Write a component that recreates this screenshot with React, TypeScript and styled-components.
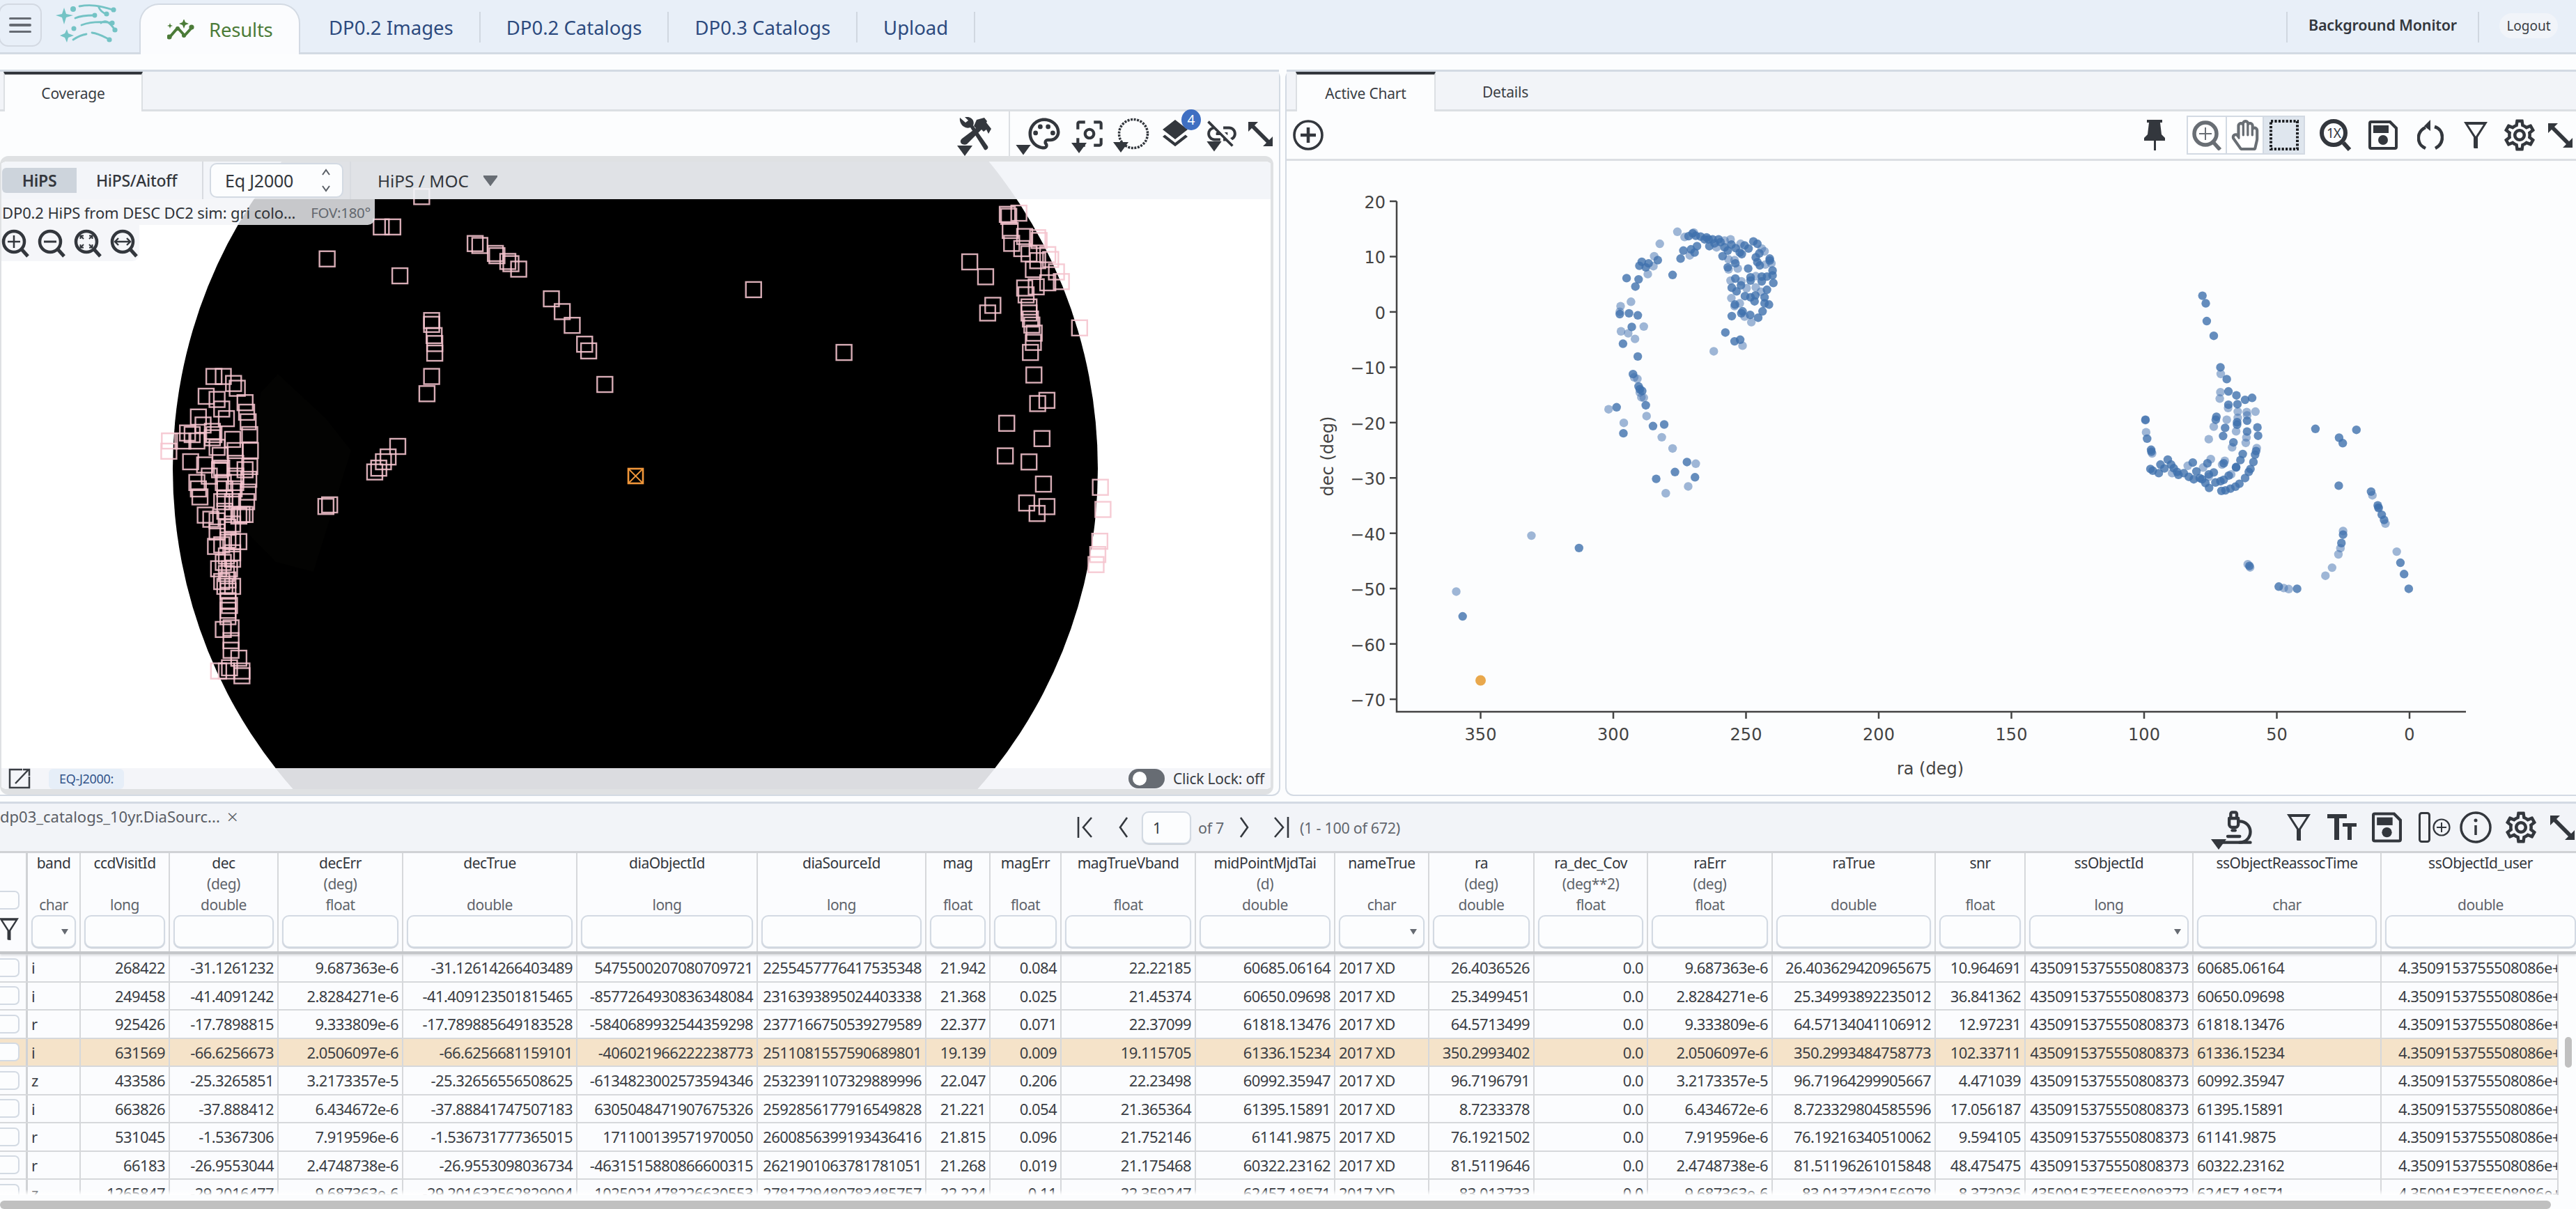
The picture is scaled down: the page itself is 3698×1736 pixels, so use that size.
import React from 'react';
import styled, { createGlobalStyle } from 'styled-components';
import { MdOutlinePalette, MdCenterFocusWeak, MdLayers, MdLinkOff, MdOutlineSettings } from 'react-icons/md';
import { FaRegHandPaper } from 'react-icons/fa';
import { Microscope } from 'lucide-react';

const Global = createGlobalStyle`
  html, body { margin: 0; padding: 0; background: #fcfdfe; }
  body { font-family: "Noto Sans", "Open Sans", sans-serif; color: #33373d; }
  * { box-sizing: border-box; }
`;

const Page = styled.div`
  width: 3698px; height: 1736px; overflow: hidden; display: flex; flex-direction: column; background: #fcfdfe;
`;

/* ---------- top bar ---------- */
const TopBar = styled.header`
  height: 78px; flex: none; display: flex; align-items: flex-end; background: #e8eff8;
  border-bottom: 3px solid #d3dae3; position: relative;
`;
const MenuButton = styled.button`
  width: 62px; height: 62px; margin: 0 20px 8px -2px; flex: none; background: #e8eff8; padding: 0;
  border: 2px solid #d3d9e2; border-radius: 14px; display: flex; flex-direction: column; gap: 6px;
  align-items: center; justify-content: center;
  & > i { display: block; width: 32px; height: 3.5px; border-radius: 2px; background: #666b73; }
`;
const LogoBox = styled.div` width: 90px; height: 62px; margin-bottom: 9px; flex: none; margin-right: 30px; `;
const ResultsTab = styled.div`
  width: 231px; height: 73px; flex: none; margin-bottom: -3px; display: flex; align-items: center; gap: 20px;
  padding: 0 0 0 38px; background: #fbfcfe; border: 2px solid #d3dae3; border-bottom: 0;
  border-radius: 28px 28px 0 0; color: #4b7b38; font-size: 27.5px; letter-spacing: -0.2px;
`;
const NavTabs = styled.nav`
  display: flex; align-items: center; gap: 37px; height: 44px; margin: 0 0 14px 41px; color: #2c4a7e; font-size: 27.5px;
  white-space: nowrap;
`;
const TabSep = styled.span` width: 2px; height: 44px; background: #d0d7e0; flex: none; `;
const TopRight = styled.div`
  margin-left: auto; display: flex; align-items: center; height: 44px; margin-bottom: 14px; font-size: 21px; white-space: nowrap;
`;
const Monitor = styled.span` font-weight: 600; margin: -8px 30px 0; font-size: 21.5px; letter-spacing: -0.2px; `;
const Logout = styled.span`
  width: 84px; height: 36px; margin: -4px 26px 0 29px; border-radius: 18px; background: #f1f4f9; display: flex;
  align-items: center; justify-content: center; font-size: 19px; color: #3a3e44;
`;
const Strip = styled.div` height: 22px; flex: none; `;

/* ---------- panels ---------- */
const Upper = styled.section` height: 1051px; flex: none; display: flex; gap: 7px; padding-bottom: 8px; `;
const LeftPanel = styled.div`
  width: 1838px; flex: none; display: flex; flex-direction: column; border-right: 2px solid #d3dae3;
  border-bottom: 2px solid #d3dae3; border-radius: 0 12px 12px 0;
`;
const RightPanel = styled.div`
  flex: 1; min-width: 0; display: flex; flex-direction: column; border-left: 2px solid #d3dae3;
  border-bottom: 2px solid #d3dae3; border-radius: 12px 0 0 12px;
`;
const TabBar = styled.div`
  height: 60px; flex: none; display: flex; background: #f2f4f8; border-top: 3px solid #d3dae3;
  border-bottom: 3px solid #dcdfe3; padding-left: ${p => p.$pad}px; font-size: 21px;
`;
const PanelTab = styled.div`
  width: ${p => p.$w}px; height: 57px; flex: none; display: flex; align-items: center; justify-content: center;
  color: #3a3e44; letter-spacing: -0.2px;
  ${p => p.$active && `background:#fcfdfe; border-top:4px solid #33373d; border-left:2px solid #dcdfe3; border-right:2px solid #dcdfe3;`}
`;
const Toolbar = styled.div`
  height: ${p => p.$h}px; flex: none; display: flex; align-items: center; padding-right: ${p => p.$pr}px;
  justify-content: ${p => p.$end ? 'flex-end' : 'flex-start'};
  color: #33373d; border-bottom: ${p => p.$line ? '3px solid #dcdfe3' : '0'};
`;
const IconBtn = styled.span`
  width: ${p => p.$w}px; height: ${p => p.$h || p.$w}px; margin-left: ${p => p.$ml || 0}px; margin-top: ${p => p.$mt || 0}px; flex: none; position: relative;
  display: flex; align-items: center; justify-content: center; color: ${p => p.$c || 'inherit'};
  & > svg { display: block; flex: none; }
`;
const Caret = styled.i`
  position: absolute; left: ${p => p.$l ?? -2}px; bottom: ${p => p.$b ?? -4}px; width: 22px; height: 15px; background: #33373d;
  clip-path: polygon(0 0, 100% 0, 50% 100%);
`;
const Badge = styled.b`
  position: absolute; left: 31px; top: -14px; width: 28px; height: 30px; border-radius: 50%; background: #3f6fc2; color: #fff;
  font-weight: 400; font-size: 19px; display: flex; align-items: center; justify-content: center;
`;
const ToolSep = styled.span` width: 2px; height: 64px; background: #dcdfe3; margin-left: ${p => p.$ml}px; flex: none; `;
const ModeGroup = styled.div`
  display: flex; margin-left: ${p => p.$ml}px; height: 56px; border: 2px solid #d3dae3; flex: none; background: #fff;
`;
const ModeBtn = styled.span`
  width: ${p => p.$w}px; display: flex; align-items: center; justify-content: center; color: #696e74;
  border-left: ${p => p.$first ? 0 : '2px solid #d3dae3'}; background: ${p => p.$on ? '#dfe6ee' : 'transparent'};
`;

/* ---------- image viewer ---------- */
const Viewer = styled.div`
  height: 917px; flex: none; margin-right: 8px; position: relative; overflow: hidden; background: #fff;
  border: solid #dfe1e3; border-width: 8px 4px 8px 2px; border-radius: 12px;
`;
const Sky = styled.svg` position: absolute; left: 0; top: 0; display: block; `;
const ViewerTop = styled.div`
  position: absolute; left: 0; right: 0; top: 0; height: 54px; background: rgba(242, 244, 248, .925);
  display: flex; align-items: center; font-size: 23px; color: #33373d;
`;
const ModeSwitch = styled.span`
  height: 36px; display: flex; align-items: center; justify-content: center; width: ${p => p.$w}px; flex: none;
  border-radius: ${p => p.$on ? '6px 0 0 6px' : '0'}; background: ${p => p.$on ? '#cdd4dc' : 'transparent'};
  font-weight: ${p => p.$on ? 600 : 500}; margin-left: ${p => p.$ml || 0}px; letter-spacing: -0.3px;
`;
const VSep = styled.span` width: 2px; height: 54px; background: #d8dbe0; flex: none; margin-left: ${p => p.$ml}px; `;
const CoordSelect = styled.span`
  width: 192px; height: 50px; margin-left: 9px; flex: none; background: #fcfdfe; border: 2px solid #d3dae3; border-radius: 10px;
  display: flex; align-items: center; justify-content: space-between; padding: 0 16px 0 20px; font-size: 25px; letter-spacing: -0.2px;
`;
const HipsMenu = styled.span` margin-left: 38px; display: flex; align-items: center; gap: 21px; font-size: 24.4px; white-space: nowrap; `;
const InfoBar = styled.div`
  position: absolute; left: 0; top: 54px; width: 536px; height: 37px; background: rgba(243, 244, 248, .82);
  border-radius: 0 0 10px 0; display: flex; align-items: center; justify-content: space-between; padding: 0 6px 0 1px;
  font-size: 22px; letter-spacing: -0.12px; white-space: nowrap; color: #2f3338;
`;
const Fov = styled.span` color: #62676e; font-size: 20.5px; letter-spacing: -0.3px; `;
const ZoomTools = styled.div`
  position: absolute; left: -2px; top: 91px; width: 200px; height: 52px; background: rgba(245, 246, 249, .96);
  border-radius: 0 0 10px 0; display: flex; align-items: center; gap: 11px; color: #33373d; padding-left: 2px;
`;
const ViewerBottom = styled.div`
  position: absolute; left: 0; right: 0; bottom: 0; height: 30px; background: rgba(243, 244, 248, .9);
  display: flex; align-items: center; padding: 0 9px 0 10px; color: #3a3e44;
`;
const CoordChip = styled.span`
  margin-left: 26px; width: 108px; height: 29px; border-radius: 6px; background: #e6eef8; color: #33548a; font-size: 18px;
  display: flex; align-items: center; justify-content: center; letter-spacing: -0.3px;
`;
const LockSwitch = styled.span`
  margin-left: auto; width: 52px; height: 28px; background: #676c73; border-radius: 15px; display: flex; align-items: center;
  padding-left: 6px; & > i { width: 20px; height: 20px; border-radius: 50%; background: #fff; }
`;
const LockLabel = styled.span` margin-left: 12px; font-size: 21px; letter-spacing: -0.2px; `;

/* ---------- chart ---------- */
const ChartArea = styled.div` flex: 1; min-height: 0; `;
const ChartSvg = styled.svg` display: block; font-family: "DejaVu Sans", Verdana, sans-serif; `;

/* ---------- table ---------- */
const TablePanel = styled.section` height: 585px; flex: none; display: flex; flex-direction: column; position: relative; `;
const TableTools = styled.div`
  height: 74px; flex: none; background: #f2f4f8; border-top: 3px solid #d3dae3; border-bottom: 3px solid #d0d2d5; display: flex;
`;
const TableLabel = styled.div`
  width: 1546px; flex: none; padding-top: 2px; font-size: 22px; color: #5a5e65; white-space: nowrap;
  display: flex; gap: 10px; align-items: flex-start; & > span { line-height: 32px; }
`;
const CloseMark = styled.span` font-size: 28px; line-height: 30px; font-weight: 300; `;
const Pager = styled.div` display: flex; align-items: center; color: #33373d; font-size: 21.5px; height: 68px; letter-spacing: -0.3px; `;
const PageInput = styled.span`
  width: 71px; height: 47px; margin: 0 10px 0 18px; background: #fcfdfe; border: 2px solid #d3dae3; border-radius: 10px;
  display: flex; align-items: center; padding-left: 14px; box-shadow: 0 1px 1px #c7ccd3;
`;
const PageMuted = styled.span` color: #62676e; margin-left: ${p => p.$ml || 0}px; `;
const TableIcons = styled.div` margin-left: auto; display: flex; align-items: center; height: 68px; color: #33373d; `;

const COLS = [
  { n: 'band', t: 'char', w: 76, left: true, drop: true },
  { n: 'ccdVisitId', t: 'long', w: 128 },
  { n: 'dec', u: '(deg)', t: 'double', w: 156 },
  { n: 'decErr', u: '(deg)', t: 'float', w: 179 },
  { n: 'decTrue', t: 'double', w: 250 },
  { n: 'diaObjectId', t: 'long', w: 259 },
  { n: 'diaSourceId', t: 'long', w: 242 },
  { n: 'mag', t: 'float', w: 92 },
  { n: 'magErr', t: 'float', w: 102 },
  { n: 'magTrueVband', t: 'float', w: 193 },
  { n: 'midPointMjdTai', u: '(d)', t: 'double', w: 200 },
  { n: 'nameTrue', t: 'char', w: 135, left: true, drop: true },
  { n: 'ra', u: '(deg)', t: 'double', w: 151 },
  { n: 'ra_dec_Cov', u: '(deg**2)', t: 'float', w: 163 },
  { n: 'raErr', u: '(deg)', t: 'float', w: 179 },
  { n: 'raTrue', t: 'double', w: 234 },
  { n: 'snr', t: 'float', w: 129 },
  { n: 'ssObjectId', t: 'long', w: 241, drop: true },
  { n: 'ssObjectReassocTime', t: 'char', w: 270, left: true },
  { n: 'ssObjectId_user', t: 'double', w: 284, clip: true },
];
const GRID = `40px ${COLS.map(c => c.w + 'px').join(' ')}`;

const ID = '4350915375550808373';
const U = '4.3509153755508086e+';
const N = '2017 XD';
const ROWS: string[][] = [
  ['i','268422','-31.1261232','9.687363e-6','-31.12614266403489','5475500207080709721','2255457776417535348','21.942','0.084','22.22185','60685.06164',N,'26.4036526','0.0','9.687363e-6','26.403629420965675','10.964691',ID,'60685.06164',U],
  ['i','249458','-41.4091242','2.8284271e-6','-41.409123501815465','-8577264930836348084','2316393895024403338','21.368','0.025','21.45374','60650.09698',N,'25.3499451','0.0','2.8284271e-6','25.34993892235012','36.841362',ID,'60650.09698',U],
  ['r','925426','-17.7898815','9.333809e-6','-17.789885649183528','-5840689932544359298','2377166750539279589','22.377','0.071','22.37099','61818.13476',N,'64.5713499','0.0','9.333809e-6','64.57134041106912','12.97231',ID,'61818.13476',U],
  ['i','631569','-66.6256673','2.0506097e-6','-66.6256681159101','-406021966222238773','2511081557590689801','19.139','0.009','19.115705','61336.15234',N,'350.2993402','0.0','2.0506097e-6','350.2993484758773','102.33711',ID,'61336.15234',U],
  ['z','433586','-25.3265851','3.2173357e-5','-25.32656556508625','-6134823002573594346','2532391107329889996','22.047','0.206','22.23498','60992.35947',N,'96.7196791','0.0','3.2173357e-5','96.71964299905667','4.471039',ID,'60992.35947',U],
  ['i','663826','-37.888412','6.434672e-6','-37.88841747507183','6305048471907675326','2592856177916549828','21.221','0.054','21.365364','61395.15891',N,'8.7233378','0.0','6.434672e-6','8.723329804585596','17.056187',ID,'61395.15891',U],
  ['r','531045','-1.5367306','7.919596e-6','-1.536731777365015','171100139571970050','2600856399193436416','21.815','0.096','21.752146','61141.9875',N,'76.1921502','0.0','7.919596e-6','76.19216340510062','9.594105',ID,'61141.9875',U],
  ['r','66183','-26.9553044','2.4748738e-6','-26.9553098036734','-4631515880866600315','2621901063781781051','21.268','0.019','21.175468','60322.23162',N,'81.5119646','0.0','2.4748738e-6','81.51196261015848','48.475475',ID,'60322.23162',U],
  ['z','1265847','-29.2016477','9.687363e-6','-29.201632562829094','1025021478226630553','2781729480783485757','22.224','0.11','22.359247','62457.18571',N,'83.013733','0.0','9.687363e-6','83.0137430156978','8.373036',ID,'62457.18571',U],
];

const HeadRow = styled.div`
  height: 145px; flex: none; display: grid; grid-template-columns: ${GRID}; background: #fbfcfe; overflow: hidden;
  border-bottom: 4px solid #c4c6c9; box-shadow: 0 2px 3px #d8dade; position: relative; z-index: 1;
`;
const HeadCell = styled.div`
  display: flex; flex-direction: column; align-items: center; border-right: ${p => p.$last ? 0 : '2px solid #d6d8db'}; min-width: 0;
`;
const HeadSel = styled.div`
  border-right: 3px solid #d0d2d5; display: flex; flex-direction: column; align-items: flex-start; padding-top: 54px; color: #33373d;
`;
const HeadBox = styled.i`
  display: block; width: 28px; height: 27px; border: 2px solid #d3dae3; border-left: 0; border-radius: 0 7px 7px 0; background: #fcfdfe;
`;
const ColName = styled.span` height: 29px; line-height: 29px; font-size: 21px; letter-spacing: -0.5px; white-space: nowrap; color: #33373d; `;
const ColSub = styled.span` height: 30px; line-height: 30px; font-size: 21px; letter-spacing: -0.5px; white-space: nowrap; color: #5f646b; `;
const FilterBox = styled.span`
  position: relative; width: calc(100% - 10px); height: 47px; margin-top: 0; flex: none; background: #fcfdfe; border: 2px solid #d3dae3;
  border-radius: 10px; box-shadow: 0 1px 1px #c7ccd3;
  ${p => p.$drop && `&::after{content:'';position:absolute;right:9px;top:18px;border:5.5px solid transparent;border-top:8px solid #666b72;border-bottom:0;}`}
`;
const TableBody = styled.div`
  height: 346px; flex: none; width: 3673px; overflow: hidden; position: relative; border-right: 2px solid #d6d8db;
  &::after { content: ''; position: absolute; left: 0; right: 0; bottom: 0; height: 8px; background: linear-gradient(rgba(255,255,255,0), #fff); }
`;
const DataRow = styled.div`
  height: 40.5px; display: grid; grid-template-columns: ${GRID}; background: ${p => p.$hi ? '#f5e3c9' : '#fbfcfe'};
  border-bottom: 2.5px solid #d6d8db; font-size: 22px; letter-spacing: -0.6px; color: #3a3e44;
`;
const SelCell = styled.div`
  border-right: 3px solid #d0d2d5; display: flex; align-items: center;
  & > i { display: block; width: 28px; height: 27px; border: 2px solid #d3dae3; border-left: 0; border-radius: 0 7px 7px 0; background: #fcfdfe; }
`;
const DataCell = styled.div`
  line-height: 38px; white-space: nowrap; overflow: hidden; border-right: 2px solid ${p => p.$last ? 'transparent' : '#d6d8db'};
  text-align: ${p => p.$left || p.$clip ? 'left' : 'right'}; padding: 0 ${p => p.$clip ? 0 : 5}px 0 ${p => p.$clip ? 24 : 5}px;
`;
const ScrollTrack = styled.div` height: 20px; flex: none; display: flex; align-items: flex-end; `;
const ScrollThumb = styled.i` width: 3662px; height: 12px; border-radius: 6px; background: #c0c0c0; `;
const VScroll = styled.i`
  position: absolute; left: 3682px; top: 338px; width: 10px; height: 44px; border-radius: 5px; background: #c0c0c0; z-index: 2;
`;

/* ---------- icons ---------- */
const Tools = () => (
  <svg width="48" height="48" viewBox="0 0 48 48" fill="currentColor">
    <path d="M3 1l8 7 4-3-5-5c5-1 10 1 12 5 1 3 1 5 0 7l21 30c1 2 0 4-2 5s-3 0-4-2L18 15c-3 1-6 1-9-1C5 12 2 6 3 1z" />
    <path d="M27 4l11-3 4 5-1 2 7 9-4 7-3-6-4 3-3-3-21 21c-2 1-6 1-8-1-2-3-1-5 1-7L26 16l-3-3z" />
  </svg>
);
const Expand = ({ s = 36 }: { s?: number }) => (
  <svg width={s} height={s} viewBox="0 0 36 36" fill="currentColor">
    <path d="M1 1h14L10 6l21 21 5-5v14H22l5-5L6 10l-5 5z" />
  </svg>
);
const Lasso = () => (
  <svg width="46" height="46" viewBox="0 0 46 46" fill="none" stroke="currentColor">
    <circle cx="23" cy="23" r="20.5" strokeWidth="3.5" strokeDasharray="3 1.6" />
  </svg>
);
const Glass = ({ kind }: { kind: string }) => (
  <svg width="41" height="41" viewBox="0 0 41 41" fill="none" stroke="currentColor">
    <circle cx="18" cy="18" r="15" strokeWidth="4.5" />
    <path d="M29 29l9 10" strokeWidth="5" />
    {kind === 'in' && <path d="M18 9v18M9 18h18" strokeWidth="2.5" />}
    {kind === 'out' && <path d="M9 18h18" strokeWidth="3" />}
    {kind === 'fit' && <path d="M10 10l4 4M26 10l-4 4M10 26l4-4M26 26l-4-4M9.5 14V9.5H14M26.500 14V9.500H22M9.500 22v4.500H14M26.500 22v4.500H22" strokeWidth="2" />}
    {kind === 'width' && <path d="M8 18h20M12 13l-5 5 5 5M24 13l5 5-5 5" strokeWidth="2.4" />}
  </svg>
);
const External = () => (
  <svg width="32" height="30" viewBox="0 0 32 30" fill="none" stroke="currentColor" strokeWidth="2.5">
    <path d="M20 2H2v26h28V12M10 22L29 2M21 2h9v9" />
  </svg>
);
const Floppy = ({ w = 42, h = 42 }: { w?: number; h?: number }) => (
  <svg width={w} height={h} viewBox="0 0 42 42">
    <path fill="currentColor" fillRule="evenodd" d="M4 0h28l10 10v28a4 4 0 0 1-4 4H4a4 4 0 0 1-4-4V4a4 4 0 0 1 4-4zM4 4v34h34V12l-8-8z" />
    <rect x="7" y="7" width="22" height="11" fill="currentColor" />
    <circle cx="21" cy="28" r="7" fill="currentColor" />
  </svg>
);
const Reset = () => (
  <svg width="38" height="44" viewBox="0 0 38 44" fill="none" stroke="currentColor" strokeWidth="4.5">
    <path d="M12 11C3 15 0 24 3 32c1 4 5 7 9 9M26 41c6-3 10-9 10-16 0-7-4-13-11-15" />
    <path d="M19 0l-9 9 9 7z" fill="currentColor" stroke="none" />
  </svg>
);
const Funnel = ({ w = 34, h = 38 }: { w?: number; h?: number }) => (
  <svg width={w} height={h} viewBox="0 0 34 38" fill="currentColor">
    <path fillRule="evenodd" d="M0 0h34L20 22v15a1 1 0 0 1-2 1h-2a2 2 0 0 1-2-1V22zM6 4l11 17L28 4z" />
  </svg>
);
const Pin = () => (
  <svg width="30" height="44" viewBox="0 0 30 44" fill="currentColor">
    <path d="M4 0h22v4h-3l2 17 5 5v4H17v14h-3V30H0v-4l5-5 2-17H4z" />
  </svg>
);
const OneX = () => (
  <svg width="47" height="46" viewBox="0 0 47 46" fill="none" stroke="currentColor">
    <circle cx="20" cy="20" r="17" strokeWidth="6" />
    <path d="M34 34l9 10" strokeWidth="6" />
    <text x="20" y="27" textAnchor="middle" fontFamily="Noto Sans" fontSize="19" fill="currentColor" stroke="none" letterSpacing="-1">1X</text>
  </svg>
);
const Marquee = () => (
  <svg width="42" height="44" viewBox="0 0 42 44" fill="none" stroke="#1b1d20" strokeWidth="4">
    <rect x="2" y="2" width="38" height="40" strokeDasharray="3.2 2.2" />
  </svg>
);
const ZoomGray = () => (
  <svg width="42" height="44" viewBox="0 0 42 44" fill="none" stroke="currentColor">
    <circle cx="19" cy="20" r="16" strokeWidth="5.5" />
    <path d="M31 33l9 10" strokeWidth="5.5" />
    <path d="M19 11v18M10 20h18" strokeWidth="2" />
  </svg>
);
const TextSize = () => (
  <svg width="42" height="38" viewBox="0 0 42 38" fill="currentColor">
    <path d="M0 0h28v6H17v31h-7V6H0zM22 13h20v5h-7v19h-6V18h-7z" />
  </svg>
);
const AddColumn = () => (
  <svg width="46" height="44" viewBox="0 0 46 44" fill="none" stroke="currentColor">
    <rect x="1.5" y="1.5" width="14" height="41" rx="3" strokeWidth="3" />
    <circle cx="33" cy="22" r="11.5" strokeWidth="2.2" />
    <path d="M33 15v14M26 22h14" strokeWidth="2" />
  </svg>
);
const InfoIcon = () => (
  <svg width="46" height="46" viewBox="0 0 46 46" fill="none" stroke="currentColor">
    <circle cx="23" cy="23" r="21" strokeWidth="3.5" />
    <path d="M23 20v14" strokeWidth="3.5" />
    <circle cx="23" cy="13" r="2.5" fill="currentColor" stroke="none" />
  </svg>
);
const PlusCircle = () => (
  <svg width="48" height="48" viewBox="0 0 48 48" fill="none" stroke="#33373d">
    <circle cx="24" cy="24" r="20" strokeWidth="3.6" />
    <path d="M24 13v22M13 24h22" strokeWidth="4.5" />
  </svg>
);
const PagerArrow = ({ dir, bar }: { dir: 'l' | 'r'; bar?: boolean }) => (
  <svg width={bar ? 24 : 16} height="34" viewBox={bar ? '0 0 24 34' : '0 0 16 34'} fill="none" stroke="#33373d" strokeWidth="2.6">
    {dir === 'l' && !bar && <path d="M13 3L3 17l10 14" />}
    {dir === 'r' && !bar && <path d="M3 3l10 14L3 31" />}
    {dir === 'l' && bar && <path d="M2 2v30M21 3L9 17l12 14" />}
    {dir === 'r' && bar && <path d="M22 2v30M3 3l12 14L3 31" />}
  </svg>
);
const Stepper = () => (
  <svg width="14" height="36" viewBox="0 0 14 36" fill="none" stroke="#5a5f66" strokeWidth="2">
    <path d="M2 10l5-7 5 7M2 26l5 7 5-7" />
  </svg>
);
const Logo = () => (
  <svg width="90" height="62" viewBox="80 4 90 62" fill="none" stroke="#74c3c5" strokeWidth="2.8" strokeLinecap="round">
    <path fill="#74c3c5" stroke="none" d="M92 11l3 9 10 2-10 3-3 10-3-10-9-3 9-2zM96 42l2 6 8 3-8 3-2 7-3-7-7-3 7-3z" />
    <g fill="#74c3c5" stroke="none">
      <circle cx="105" cy="13" r="4" /><circle cx="106" cy="41" r="3.5" /><circle cx="163" cy="14" r="3.6" />
      <circle cx="153" cy="20" r="3.6" /><circle cx="136" cy="22" r="3.4" /><circle cx="161" cy="33" r="3.6" />
      <circle cx="165" cy="43" r="3.6" /><circle cx="157" cy="57" r="3.6" />
    </g>
    <path d="M114 9c16-3 28-1 48 5M141 9c3 7 7 10 12 11M108 26c9-4 18-4 27-4M117 36c14-5 30-5 44-3M145 33c6-5 12-2 20 10M105 57c6-4 12-7 19-8M132 47c9 1 16 5 24 9" />
  </svg>
);
const ResultsIcon = () => (
  <svg width="40" height="30" viewBox="240 26 40 30" fill="none" stroke="#4b7b38" strokeWidth="4">
    <path d="M243 52l12-14 10 11 11-12" strokeLinejoin="round" />
    <g fill="#4b7b38" stroke="none">
      <circle cx="243" cy="51" r="3.6" /><circle cx="255" cy="39" r="3" /><circle cx="264" cy="49" r="3" /><circle cx="275" cy="37" r="3.6" />
      <path d="M264 25l2 5 5 2-5 2-2 5-2-5-5-2 5-2zM244 31l1 3 3 1-3 1-1 3-1-3-3-1 3-1z" />
    </g>
  </svg>
);
const ChevDown = () => (
  <svg width="20" height="16" viewBox="0 0 20 16"><path d="M1 1h18a1 1 0 0 1 1 2l-9 12a1 1 0 0 1-2 0L0 3a1 1 0 0 1 1-2z" fill="#686d74" /></svg>
);

/* ---------- sky data (zoom-crop coordinates mapped to page px) ---------- */
const A: number[][] = [[908,5],[778,100],[815,100],[604,200],[838,253],[1080,152],[1095,158],[1145,183],[1150,190],[1185,208],[1195,215],[1220,232],[1325,325],[1360,365],[1392,408],[1432,467],[1445,488],[1497,593],[940,393],[940,405],[948,440],[950,465],[950,495],[940,568],[925,622],[831,787],[800,820],[785,835],[770,855],[757,867],[600,975],[612,970],
  [340,650],[345,680],[350,710],[355,750],[357,800],[355,850],[352,890],[350,930],[345,960],[340,1000],[300,765],[308,800],[310,840],[310,880],[305,920],[300,960],[300,1000],[265,855],[260,815],[240,750],[205,720],[190,695],[215,630],[240,568],[270,568],[303,590],[315,605],[250,640],[265,670],[280,700],[235,740],[155,745],[170,750],[140,770],[97,770],[95,802],[165,835],[185,900],[190,920],[195,945],[212,1002],[225,880],[210,845],[185,770],
  [275,950],[275,990],[250,1055],[265,1095],[300,1085],[320,1085],[320,1005],[330,1000],[285,1040],[280,1130],[300,1140],[255,1170],[290,1170],[265,1210],[285,1205],[285,1240],[285,1270],[285,1300],[285,1320],[270,1360],[295,1355],[295,1395],[295,1425],[320,1450],[255,1490],[280,1490],[290,1480],[330,1490],[330,1505],
  [235,760],[250,790],[258,860],[270,900],[275,920],[310,900],[340,860],[265,960],[300,1030],[250,1020],[230,1015],[245,1100],[285,1080],[300,1120],[270,1150],[280,1185],[275,1225],[300,1225],[290,1285]];
const B: number[][] = [[197,287],[510,443],[1080,105],[1115,97],[1075,100],[1085,140],[1090,172],[1135,155],[1180,158],[1185,165],[1125,185],[1150,198],[1180,215],[1215,200],[1225,212],[1245,243],[1262,267],[1165,237],[1215,270],[945,218],[1000,255],[1025,326],[1007,345],[1135,283],[1175,280],[1140,300],[1150,330],[1150,345],[1155,360],[1160,375],[1168,395],[1165,418],[1155,443],[1167,499],[1212,562],[1180,570],[1073,619],[1195,657],[1068,700],[1150,715],[1200,770],[1142,817],[1212,826],[1178,843],[1397,778],[1406,833],[1395,912],[1388,945],[1382,970],[1325,382]];
const SQUARES = [
  ...A.map(([x, y]) => [200 + x / 2.24, 280 + y / 2.18]),
  ...B.map(([x, y]) => [1000 + x / 2.41, 250 + y / 1.73]),
];

const L1: number[][] = [[972,146],[990,159],[928,176],[914,207],[898,252],[912,232],[1105,165],[1130,176],[1190,195],[1207,225],[1192,228],[1115,217],[1100,215],[1123,238],[1100,240],[1105,268],[1132,270],[1145,287],[1168,285],[1181,296],[1107,312],[1128,325],[1115,332],[1140,358],[1157,372],[1135,431],[1063,445],[830,332],[828,346],[856,321],[888,383],[831,395],[849,400],[866,414],[864,510],[872,514],[878,548],[888,561],[882,560],[800,590],[895,607],[838,624],[933,660],[960,688],[1018,726],[999,783],[943,800],[607,906],[419,1046],[1003,205],[1070,185],[1013,148],[1090,168],[1183,188],[1168,257]];
const D1: number[][] = [[1000,157],[1010,150],[1018,156],[1030,158],[1040,165],[1050,165],[1060,165],[1075,165],[1045,160],[1052,182],[1065,175],[1080,172],[1090,185],[1098,193],[1107,178],[1118,187],[1128,198],[1133,202],[1140,180],[1150,188],[1162,170],[1172,176],[1177,200],[1168,210],[1172,222],[1178,230],[1203,213],[1203,218],[1210,243],[1196,258],[1210,255],[1212,274],[1183,270],[1183,258],[1155,260],[1155,268],[1149,238],[1085,207],[1098,235],[1117,225],[1117,263],[1131,280],[1108,286],[1120,295],[1196,291],[1141,307],[1155,310],[1167,305],[1165,320],[1190,310],[1190,325],[1201,328],[1185,345],[1154,354],[1132,350],[1135,345],[1116,328],[1108,357],[1174,361],[1092,398],[1115,420],[1129,416],[960,254],[980,213],[987,193],[1006,190],[1015,198],[1021,182],[877,231],[883,221],[893,235],[900,225],[923,217],[845,262],[875,265],[867,283],[828,352],[851,350],[873,355],[858,384],[836,426],[873,458],[861,502],[875,533],[878,540],[884,544],[893,580],[820,585],[837,650],[911,632],[939,628],[996,722],[966,747],[919,764],[1016,760],[726,937],[435,1108]];
const L2: number[][] = [[811,532],[810,606],[808,632],[833,670],[862,685],[889,687],[915,685],[862,710],[890,700],[829,718],[790,746],[857,765],[888,790],[775,797],[886,812],[845,830],[585,720],[587,769],[605,855],[919,833],[781,878],[823,885],[815,900],[758,912],[712,905],[665,935],[775,950],[842,940],[1266,1025],[1178,1170],[1170,1240],[1164,1265],[1145,1319],[1125,1352],[1339,1254],[892,1305],[899,1318],[1000,1402],[1015,1406],[1305,1140],[1285,1078]];
const D2: number[][] = [[756,214],[766,245],[769,317],[790,377],[810,505],[829,553],[834,603],[858,619],[884,637],[905,629],[861,655],[834,657],[798,706],[796,718],[860,728],[860,738],[890,722],[824,751],[818,784],[921,749],[923,783],[890,766],[849,810],[877,857],[917,845],[914,860],[909,890],[870,882],[857,912],[820,895],[771,895],[727,892],[652,880],[630,900],[590,795],[585,718],[602,840],[603,848],[600,918],[607,925],[625,935],[642,916],[662,900],[670,915],[680,930],[684,942],[700,935],[715,950],[730,960],[738,928],[748,955],[755,960],[765,975],[776,995],[795,973],[810,968],[820,962],[835,945],[857,910],[884,955],[895,930],[900,918],[867,978],[855,990],[840,998],[825,1005],[813,1007],[790,932],[775,940],[1095,755],[1218,759],[1166,791],[1177,813],[1165,986],[1262,1010],[1282,1066],[1284,1075],[1294,1104],[1301,1125],[1178,1185],[1173,1219],[1350,1299],[1361,1345],[1375,1405],[985,1396],[1040,1405],[897,1312]];
const m1 = ([x, y]: number[]) => [1850 + x / 1.742, 250 + y / 1.742];
const m2 = ([x, y]: number[]) => [2800 + x / 2.09, 350 + y / 2.83];
const LIGHT = [...L1.map(m1), ...L2.map(m2)];
const DARK = [...D1.map(m1), ...D2.map(m2)];

const SkyView = () => (
  <Sky width="1822" height="901" viewBox="2 232 1822 901">
    <rect x="2" y="232" width="1822" height="901" fill="#fff" />
    <ellipse cx="912" cy="673" rx="664" ry="684" fill="#000" />
    <path d="M399 537l69 64 36 46-54 174-54-14-40-41 18-202z" fill="#030302" />
    {SQUARES.map(([x, y], i) => (
      <rect key={i} x={x - 11} y={y - 11} width="22" height="22" fill="none" stroke="#f5c4ce" strokeWidth="2.4" opacity=".88" />
    ))}
    <g fill="none" stroke="#f0963a" strokeWidth="2.6">
      <rect x="902" y="673" width="21" height="21" />
      <path d="M902 673l21 21M923 673l-21 21" strokeWidth="1.8" />
    </g>
  </Sky>
);

const YT = [20, 10, 0, -10, -20, -30, -40, -50, -60, -70];
const XT = [350, 300, 250, 200, 150, 100, 50, 0];
const fmt = (v: number) => (v < 0 ? `\u2212${-v}` : `${v}`);
const Chart = () => (
  <ChartSvg width="1851" height="909" viewBox="1847 232 1851 909">
    <g fill="none" stroke="#444" strokeWidth="2.5">
      <path d="M2005 290V1023H3540" />
      {YT.map((v, i) => <path key={v} d={`M1995 ${290 + i * 79.45}h10`} />)}
      {XT.map(v => <path key={v} d={`M${3459 - v * 3.81} 1023v10`} />)}
    </g>
    <g fill="#444" fontSize="24">
      {YT.map((v, i) => <text key={v} x="1989" y={300 + i * 79.45} textAnchor="end">{fmt(v)}</text>)}
      {XT.map(v => <text key={v} x={3459 - v * 3.81} y="1064" textAnchor="middle">{v}</text>)}
      <text x="2771" y="1113" textAnchor="middle">ra (deg)</text>
      <text x="1914" y="656" textAnchor="middle" transform="rotate(-90 1914 656)">dec (deg)</text>
    </g>
    <g fill="#3f70ad">
      {LIGHT.map(([x, y], i) => <circle key={i} cx={x} cy={y} r="6.2" opacity=".5" />)}
      {DARK.map(([x, y], i) => <circle key={i} cx={x} cy={y} r="6.2" opacity=".8" />)}
    </g>
    <circle cx="2125.5" cy="978" r="7.5" fill="#e9a84c" />
  </ChartSvg>
);

export default function App() {
  return (
    <Page>
      <Global />
      <TopBar>
        <MenuButton><i /><i /><i /></MenuButton>
        <LogoBox><Logo /></LogoBox>
        <ResultsTab><ResultsIcon /><span>Results</span></ResultsTab>
        <NavTabs>
          <span>DP0.2 Images</span><TabSep />
          <span>DP0.2 Catalogs</span><TabSep />
          <span>DP0.3 Catalogs</span><TabSep />
          <span>Upload</span><TabSep />
        </NavTabs>
        <TopRight>
          <TabSep />
          <Monitor>Background Monitor</Monitor>
          <TabSep />
          <Logout>Logout</Logout>
        </TopRight>
      </TopBar>
      <Strip />
      <Upper>
        <LeftPanel>
          <TabBar $pad={5}><PanelTab $w={200} $active>Coverage</PanelTab></TabBar>
          <Toolbar $h={64} $pr={10} $end>
            <IconBtn $w={48}><Tools /><Caret $l={-1} $b={-8} /></IconBtn>
            <ToolSep $ml={25} />
            <IconBtn $w={45} $ml={26}><MdOutlinePalette size={54} /><Caret $l={-18} $b={-8} /></IconBtn>
            <IconBtn $w={40} $ml={23}><MdCenterFocusWeak size={50} /><Caret $l={-6} $b={-8} /></IconBtn>
            <IconBtn $w={46} $ml={20}><Lasso /><Caret $l={-6} $b={-4} /></IconBtn>
            <IconBtn $w={43} $ml={15}><MdLayers size={48} /><Badge>4</Badge></IconBtn>
            <IconBtn $w={43} $ml={24}><MdLinkOff size={50} /><Caret $l={0} $b={-4} /></IconBtn>
            <IconBtn $w={35} $ml={16}><Expand /></IconBtn>
          </Toolbar>
          <Viewer>
            <SkyView />
            <ViewerTop>
              <ModeSwitch $on $w={107} $ml={1}>HiPS</ModeSwitch>
              <ModeSwitch $w={172}>HiPS/Aitoff</ModeSwitch>
              <VSep $ml={8} />
              <CoordSelect>Eq J2000<Stepper /></CoordSelect>
              <VSep $ml={9} />
              <HipsMenu>HiPS / MOC <ChevDown /></HipsMenu>
            </ViewerTop>
            <InfoBar><span>DP0.2 HiPS from DESC DC2 sim: gri colo…</span><Fov>FOV:180°</Fov></InfoBar>
            <ZoomTools><Glass kind="in" /><Glass kind="out" /><Glass kind="fit" /><Glass kind="width" /></ZoomTools>
            <ViewerBottom>
              <External />
              <CoordChip>EQ-J2000:</CoordChip>
              <LockSwitch><i /></LockSwitch>
              <LockLabel>Click Lock: off</LockLabel>
            </ViewerBottom>
          </Viewer>
        </LeftPanel>
        <RightPanel>
          <TabBar $pad={13}>
            <PanelTab $w={201} $active>Active Chart</PanelTab>
            <PanelTab $w={200}>Details</PanelTab>
          </TabBar>
          <Toolbar $h={71} $pr={5} $line>
            <IconBtn $w={48} $ml={7}><PlusCircle /></IconBtn>
            <IconBtn $w={30} $ml={1176}><Pin /></IconBtn>
            <ModeGroup $ml={31}>
              <ModeBtn $w={54} $first><ZoomGray /></ModeBtn>
              <ModeBtn $w={53}><FaRegHandPaper size={44} /></ModeBtn>
              <ModeBtn $w={59} $on><Marquee /></ModeBtn>
            </ModeGroup>
            <IconBtn $w={47} $ml={21}><OneX /></IconBtn>
            <IconBtn $w={42} $ml={23}><Floppy /></IconBtn>
            <IconBtn $w={38} $ml={28}><Reset /></IconBtn>
            <IconBtn $w={34} $ml={29}><Funnel /></IconBtn>
            <IconBtn $w={41} $ml={25}><MdOutlineSettings size={54} /></IconBtn>
            <IconBtn $w={36} $ml={20}><Expand /></IconBtn>
          </Toolbar>
          <ChartArea><Chart /></ChartArea>
        </RightPanel>
      </Upper>
      <TablePanel>
        <TableTools>
          <TableLabel><span>dp03_catalogs_10yr.DiaSourc...</span><CloseMark>×</CloseMark></TableLabel>
          <Pager>
            <PagerArrow dir="l" bar />
            <IconBtn $w={16} $h={34} $ml={35}><PagerArrow dir="l" /></IconBtn>
            <PageInput>1</PageInput>
            <PageMuted>of 7</PageMuted>
            <IconBtn $w={16} $h={34} $ml={21}><PagerArrow dir="r" /></IconBtn>
            <IconBtn $w={24} $h={34} $ml={33}><PagerArrow dir="r" bar /></IconBtn>
            <PageMuted $ml={15}>(1 - 100 of 672)</PageMuted>
          </Pager>
          <TableIcons>
            <IconBtn $w={46}><Microscope size={52} strokeWidth={2} /><Caret $l={-14} $b={-9} /></IconBtn>
            <IconBtn $w={37} $ml={47}><Funnel /></IconBtn>
            <IconBtn $w={42} $ml={23}><TextSize /></IconBtn>
            <IconBtn $w={43} $ml={22}><Floppy w={43} h={44} /></IconBtn>
            <IconBtn $w={46} $ml={24}><AddColumn /></IconBtn>
            <IconBtn $w={46} $ml={13}><InfoIcon /></IconBtn>
            <IconBtn $w={42} $ml={21}><MdOutlineSettings size={54} /></IconBtn>
            <IconBtn $w={40} $ml={18}><Expand /></IconBtn>
          </TableIcons>
        </TableTools>
        <HeadRow>
          <HeadSel>
            <HeadBox />
            <IconBtn $w={28} $h={40} $ml={-1} $mt={8}><Funnel w={28} h={32} /></IconBtn>
          </HeadSel>
          {COLS.map((c, i) => (
            <HeadCell key={c.n} $last={i === COLS.length - 1}>
              <ColName>{c.n}</ColName>
              <ColSub>{c.u || '\u00a0'}</ColSub>
              <ColSub>{c.t}</ColSub>
              <FilterBox $drop={c.drop} />
            </HeadCell>
          ))}
        </HeadRow>
        <TableBody>
          {ROWS.map((r, ri) => (
            <DataRow key={ri} $hi={ri === 3}>
              <SelCell><i /></SelCell>
              {r.map((v, i) => (
                <DataCell key={i} $left={COLS[i].left} $clip={COLS[i].clip} $last={COLS[i].clip}>{v}</DataCell>
              ))}
            </DataRow>
          ))}
        </TableBody>
        <VScroll />
        <ScrollTrack><ScrollThumb /></ScrollTrack>
      </TablePanel>
    </Page>
  );
}
